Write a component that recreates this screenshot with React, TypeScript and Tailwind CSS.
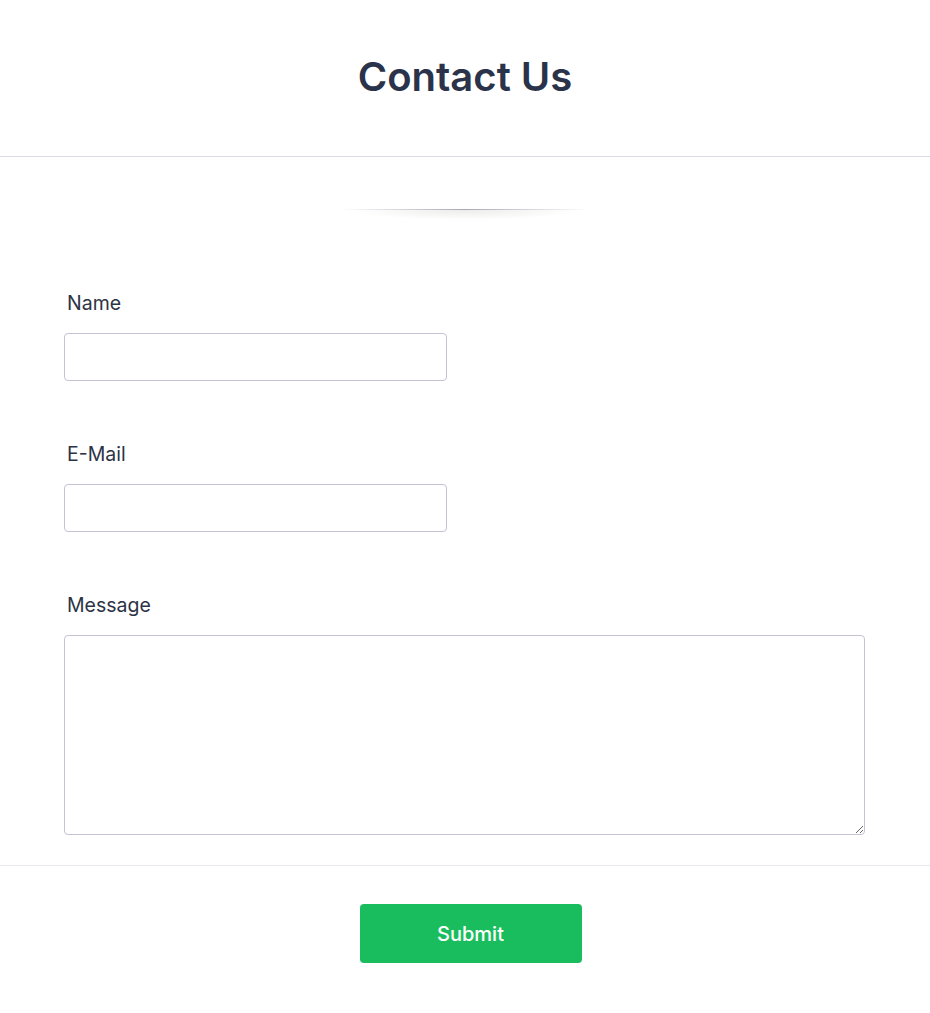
import React from "react";

export default function App() {
  return (
    <div
      className="min-h-[1013px] w-full bg-white flex flex-col"
      style={{ fontFamily: "Inter, 'Noto Sans', sans-serif" }}
    >
      <div className="h-[157px] flex items-center justify-center border-b border-[#dcdce6]">
        <h1 className="text-[40px] font-semibold text-[#2a3349] leading-none -mt-[3px]">Contact Us</h1>
      </div>

      <div className="flex justify-center pt-[52px]">
        <div className="relative w-[250px] h-[20px]">
          <div className="h-px w-full bg-gradient-to-r from-transparent via-[#a8a8b8] to-transparent" />
          <div className="absolute left-[10px] right-[10px] top-px h-[10px] bg-[radial-gradient(ellipse_at_top,rgba(200,200,190,0.35),transparent_70%)]" />
        </div>
      </div>

      <div className="px-[64px] pt-[60px] pb-[30px] border-b border-[#e8e8ee] flex flex-col gap-[59px]">
        <div className="flex flex-col gap-[16px]">
          <label className="pl-[3px] text-[19.5px] leading-[28px] text-[#2c3345]">Name</label>
          <input className="w-[383px] h-[48px] border border-[#c3c3d3] rounded-[4px] outline-none px-3" />
        </div>
        <div className="flex flex-col gap-[16px]">
          <label className="pl-[3px] text-[19.5px] leading-[28px] text-[#2c3345]">E-Mail</label>
          <input className="w-[383px] h-[48px] border border-[#c3c3d3] rounded-[4px] outline-none px-3" />
        </div>
        <div className="flex flex-col gap-[16px]">
          <label className="pl-[3px] text-[19.5px] leading-[28px] text-[#2c3345]">Message</label>
          <textarea className="block w-[801px] h-[200px] border border-[#c3c3d3] rounded-[4px] outline-none p-3" />
        </div>
      </div>

      <div className="flex justify-center pt-[38px] pb-[50px]">
        <button className="w-[222px] h-[59px] bg-[#19bd5d] rounded-[4px] text-white text-[20px] font-medium ml-[11px]">
          Submit
        </button>
      </div>
    </div>
  );
}
